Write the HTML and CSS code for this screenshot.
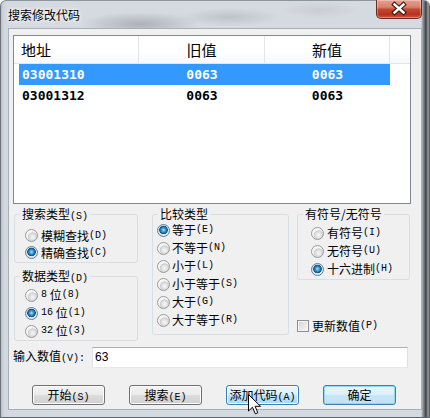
FILE: index.html
```html
<!DOCTYPE html>
<html lang="zh-CN">
<head>
  <meta charset="UTF-8">
  <title>搜索修改代码</title>
  <link rel="stylesheet" href="styles.css">
</head>
<body>
<div class="window">
  <div class="titlebar">
    <span class="title">搜索修改代码</span>
    <span class="close">
      <svg width="46" height="19" viewBox="0 0 46 19">
        <path d="M18.5 5.5 L27.5 13.5 M27.5 5.5 L18.5 13.5" stroke="#3a1814" stroke-width="4.6" stroke-linecap="square"/>
        <path d="M18.5 5.5 L27.5 13.5 M27.5 5.5 L18.5 13.5" stroke="#fff" stroke-width="2.4" stroke-linecap="square"/>
      </svg>
    </span>
  </div>

  <div class="client">
    <div class="listview">
      <div class="lv-head">
        <div class="hc c1">地址</div>
        <div class="hc c2">旧值</div>
        <div class="hc c3">新值</div>
        <div class="hc filler"></div>
      </div>
      <div class="lv-row selected"><span class="c1">03001310</span><span class="c2">0063</span><span class="c3">0063</span></div>
      <div class="lv-row"><span class="c1">03001312</span><span class="c2">0063</span><span class="c3">0063</span></div>
    </div>

    <div class="options">
      <div class="col-left">
        <div class="group g-search">
          <div class="gtitle">搜索类型<span class="k">(S)</span></div>
          <label class="radio"><span class="dot"></span>模糊查找<span class="k">(D)</span></label>
          <label class="radio"><span class="dot on"></span>精确查找<span class="k">(C)</span></label>
        </div>
        <div class="group g-data">
          <div class="gtitle">数据类型<span class="k">(D)</span></div>
          <label class="radio"><span class="dot"></span><span class="k">8</span>&nbsp;位<span class="k">(8)</span></label>
          <label class="radio"><span class="dot on"></span><span class="k">16</span>&nbsp;位<span class="k">(1)</span></label>
          <label class="radio"><span class="dot"></span><span class="k">32</span>&nbsp;位<span class="k">(3)</span></label>
        </div>
      </div>

      <div class="group g-compare">
        <div class="gtitle">比较类型</div>
        <label class="radio"><span class="dot on"></span>等于<span class="k">(E)</span></label>
        <label class="radio"><span class="dot"></span>不等于<span class="k">(N)</span></label>
        <label class="radio"><span class="dot"></span>小于<span class="k">(L)</span></label>
        <label class="radio"><span class="dot"></span>小于等于<span class="k">(S)</span></label>
        <label class="radio"><span class="dot"></span>大于<span class="k">(G)</span></label>
        <label class="radio"><span class="dot"></span>大于等于<span class="k">(R)</span></label>
      </div>

      <div class="col-right">
        <div class="group g-sign">
          <div class="gtitle">有符号/无符号</div>
          <label class="radio"><span class="dot"></span>有符号<span class="k">(I)</span></label>
          <label class="radio"><span class="dot"></span>无符号<span class="k">(U)</span></label>
          <label class="radio"><span class="dot on"></span>十六进制<span class="k">(H)</span></label>
        </div>
        <label class="check"><span class="box"></span>更新数值<span class="k">(P)</span></label>
      </div>
    </div>

    <div class="input-row">
      <label class="input-label">输入数值<span class="k">(V):</span></label>
      <div class="textbox">63</div>
    </div>

    <div class="buttons">
      <div class="btn">开始<span class="k">(S)</span></div>
      <div class="btn">搜索<span class="k">(E)</span></div>
      <div class="btn hover">添加代码<span class="k">(A)</span></div>
      <div class="btn default">确定</div>
    </div>
  </div>

  <svg class="cursor" width="14" height="22" viewBox="0 0 14 22">
    <path d="M0.5 0.5 L0.5 17 L4.5 13.2 L7.3 19.8 L9.8 18.8 L7.1 12.3 L12.5 12.3 Z" fill="#fff" stroke="#000" stroke-width="1" stroke-linejoin="miter"/>
  </svg>
</div>
</body>
</html>
```

FILE: styles.css
```css
* { box-sizing: border-box; }
body { margin: 0; background: #fff; font-family: "Noto Sans CJK SC", "Liberation Sans", sans-serif; font-size: 12px; color: #000; }

.window {
  position: relative; width: 430px; height: 418px; padding: 0 8px 8px; border-radius: 6px 6px 0 0; overflow: hidden;
  background:
    radial-gradient(ellipse 60px 12px at 140px 24px, rgba(80,84,90,.3), transparent),
    radial-gradient(ellipse 50px 9px at 230px 17px, rgba(110,114,120,.22), transparent),
    radial-gradient(ellipse 40px 8px at 320px 10px, rgba(150,150,150,.18), transparent),
    linear-gradient(90deg, #a9b0b8 0, #cdd3d9 3px, #d5dae0 8px, #d5dae0 421px, #8d9297 423px, #3d4044 426px, #9a9ea3 428px, #4a4d51 430px);
  box-shadow: inset 1px 0 0 #6b727a, inset 0 -1px 0 #5e646b, inset 0 1px 0 #8e969f;
}

.titlebar { display: flex; height: 28px; align-items: flex-start; }
.title { padding-top: 8px; line-height: 14px; font-size: 12px; color: #000; text-shadow: 0 0 6px #fff, 0 0 3px #fff; }
.close {
  margin-left: auto; width: 46px; height: 19px; display: block;
  border: 1px solid #6d2a22; border-top: none; border-radius: 0 0 5px 5px;
  background: linear-gradient(#e6a191 0%, #d7806c 40%, #c3472f 52%, #b8321e 80%, #cf573a 100%);
  box-shadow: inset 0 0 0 1px rgba(255,255,255,.3);
}
.close svg { display: block; margin: -1px 0 0 -1px; }

.client {
  height: 382px; background: #f0f0f0; border: 1px solid #a7afb8;
  padding: 6px 0 0 4px;
}

/* list view */
.listview { width: 398px; height: 169px; border: 1px solid #828790; background: #fff; }
.lv-head { display: flex; height: 28px; border-bottom: 1px solid #e5e5e5; background: linear-gradient(#fff 0, #fff 55%, #f7f8f9 100%); }
.hc { font-size: 15px; line-height: 27px; border-right: 1px solid #e3e5e8; }
.hc.c1 { width: 125px; padding-left: 7px; }
.hc.c2 { width: 126px; text-align: center; }
.hc.c3 { width: 125px; text-align: center; }
.hc.filler { flex: 1; border-right: none; }

.lv-row { display: flex; width: 371px; height: 21px; margin-left: 5px; font: bold 13px/21px "DejaVu Sans Mono", monospace; }
.lv-row .c1 { width: 120px; padding-left: 3px; }
.lv-row .c2 { width: 126px; text-align: center; }
.lv-row .c3 { width: 125px; text-align: center; }
.lv-row.selected { background: #3399ff; color: #fff; }

/* option groups */
.options { display: flex; height: 128px; margin: 3px 0 0 1px; }
.col-left { display: flex; flex-direction: column; width: 124px; }
.col-right { display: flex; flex-direction: column; justify-content: space-between; width: 113px; margin-left: 8px; }

.group { margin-top: 7px; border: 1px solid #d5dfe5; border-radius: 3px; }
.gtitle { width: fit-content; margin: -8px 0 0 5px; padding: 0 2px; background: #f0f0f0; line-height: 14px; white-space: nowrap; }

.g-search { padding: 0 0 1px 10px; }
.g-search .gtitle { margin-bottom: 3px; margin-left: -5px; }
.g-search .radio { height: 17px; }
.g-data { flex: 1; margin-top: 13px; padding-left: 10px; }
.g-data .gtitle { margin-left: -5px; }
.g-compare { width: 137px; margin-left: 14px; padding-left: 4px; }
.g-compare .gtitle { margin-left: 1px; }
.g-compare .dot { margin-right: 2px; }
.g-sign { padding: 0 0 1px 13px; }
.g-sign .gtitle { margin-left: -8px; margin-bottom: 3px; }

.radio { display: flex; align-items: center; height: 18px; line-height: 14px; white-space: nowrap; }
.k { font-family: "Liberation Mono", monospace; font-size: 10px; }

.dot {
  width: 13px; height: 13px; margin-right: 3px; flex: none; border-radius: 50%;
  border: 1px solid #979a9d;
  background: radial-gradient(circle at 60% 65%, #f7f7f7 0, #e4e4e4 2.5px, #cdcdcd 4.5px, #eeeeee 5px, #f8f8f8 6px);
}
.dot.on {
  border-color: #5c7f98;
  background:
    radial-gradient(circle at 50% 45%, #a6e6ff 0, #3c9ad3 2px, #124f82 4px, rgba(18,79,130,0) 4.6px),
    radial-gradient(circle, #f4f6f8 0, #dfe4e8 5px, #f6f6f6 6px);
}

.check { display: flex; align-items: center; height: 18px; line-height: 14px; }
.box {
  width: 12px; height: 12px; margin-right: 3px; flex: none;
  border: 1px solid #8f8f8f; background: linear-gradient(135deg, #d4d4d4, #f7f7f7);
  box-shadow: inset 0 0 0 1px #f4f4f4;
}

/* value input */
.input-row { display: flex; align-items: center; height: 21px; margin-top: 12px; }
.input-label { width: 79px; line-height: 14px; white-space: nowrap; }
.textbox {
  width: 316px; height: 21px; padding-left: 2px; background: #fff; line-height: 19px;
  font-family: "Liberation Sans", sans-serif; font-size: 12px;
  border: 1px solid #e3e9ef; border-top-color: #abadb3; border-left-color: #e2e3ea; border-right-color: #dbdfe6;
}

/* buttons */
.buttons { display: flex; gap: 24px; margin: 17px 0 0 19px; }
.btn {
  width: 73px; height: 20px; line-height: 18px; text-align: center; white-space: nowrap;
  border: 1px solid #707070; border-radius: 3px;
  background: linear-gradient(#f2f2f2 0%, #ebebeb 50%, #dddddd 50%, #cfcfcf 100%);
  box-shadow: inset 0 0 0 1px #fcfcfc;
}
.btn.hover {
  border-color: #3c7fb1;
  background: linear-gradient(#eaf6fd 0%, #d9f0fc 50%, #bee6fd 50%, #a7d9f5 100%);
}
.btn.default {
  border-color: #3c7fb1;
  background: linear-gradient(#e9f5fc 0%, #dcf0fa 50%, #c8e7f8 50%, #bfe0f4 100%);
  box-shadow: inset 0 0 0 1px #8fd9f8;
}

.cursor { position: absolute; left: 248px; top: 394px; }
```
